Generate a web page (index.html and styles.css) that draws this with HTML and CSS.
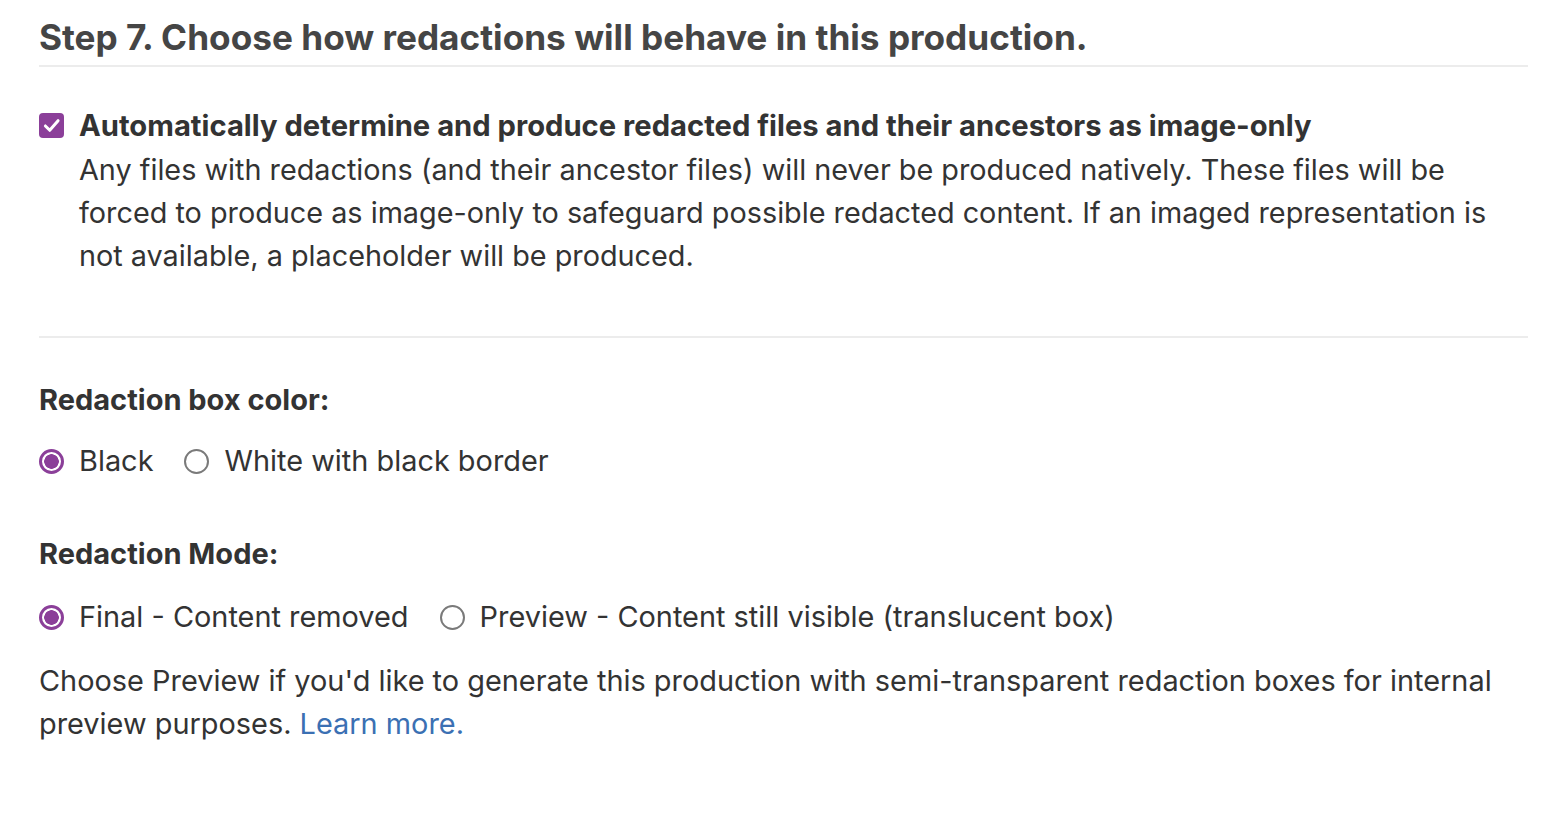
FILE: index.html
```html
<!DOCTYPE html>
<html>
<head>
<meta charset="utf-8">
<link rel="stylesheet" href="styles.css">
</head>
<body>
<div class="page">
  <h1 class="title">Step 7. Choose how redactions will behave in this production.</h1>

  <div class="check-row">
    <span class="checkbox">
      <svg viewBox="0 0 24 24" width="21" height="21"><path d="M5 12.5 L10 17.5 L19.5 6.5" fill="none" stroke="#fff" stroke-width="3.4" stroke-linecap="round" stroke-linejoin="round"/></svg>
    </span>
    <div class="check-text">
      <div class="check-label">Automatically determine and produce redacted files and their ancestors as image-only</div>
      <div class="check-desc">Any files with redactions (and their ancestor files) will never be produced natively. These files will be forced to produce as image-only to safeguard possible redacted content. If an imaged representation is not available, a placeholder will be produced.</div>
    </div>
  </div>

  <hr class="rule">

  <div class="field">
    <div class="field-label">Redaction box color:</div>
    <div class="radios">
      <label class="radio"><span class="dot on"></span>Black</label>
      <label class="radio"><span class="dot"></span>White with black border</label>
    </div>
  </div>

  <div class="field">
    <div class="field-label">Redaction Mode:</div>
    <div class="radios">
      <label class="radio"><span class="dot on"></span>Final - Content removed</label>
      <label class="radio"><span class="dot"></span>Preview - Content still visible (translucent box)</label>
    </div>
    <p class="note">Choose Preview if you'd like to generate this production with semi-transparent redaction boxes for internal preview purposes. <a class="link" href="#">Learn more.</a></p>
  </div>
</div>
</body>
</html>
```

FILE: styles.css
```css
html, body {
  margin: 0;
  padding: 0;
  background: #fff;
}
body {
  font-family: Inter, "Noto Sans", "Liberation Sans", sans-serif;
  color: #333;
}
.page {
  width: 1489px;
  padding: 14px 0 0 39px;
}
.title {
  margin: 0;
  font-size: 35.2px;
  font-weight: 700;
  color: #454545;
  line-height: 46px;
  padding-bottom: 5px;
  border-bottom: 2px solid #ececec;
}
.check-row {
  display: flex;
  gap: 15px;
  margin-top: 43px;
}
.checkbox {
  flex: none;
  width: 25px;
  height: 25px;
  margin-top: 3px;
  border-radius: 4px;
  background: #8b3f99;
  display: flex;
  align-items: center;
  justify-content: center;
}
.check-text {
  font-size: 28.8px;
  line-height: 43px;
}
.check-label {
  font-weight: 700;
  font-size: 29.2px;
  color: #333;
  line-height: 32px;
  margin-bottom: 6px;
}
.check-desc {
  color: #333;
}
.rule {
  border: 0;
  border-top: 2px solid #ececec;
  margin: 59px 0 0 0;
}
.field {
  margin-top: 45px;
}
.field + .field {
  margin-top: 58px;
}
.field-label {
  font-size: 29px;
  font-weight: 700;
  color: #333;
  line-height: 34px;
}
.radios {
  display: flex;
  gap: 31px;
  margin-top: 26px;
}
.field + .field .radios {
  margin-top: 28px;
}
.radio {
  display: flex;
  align-items: center;
  gap: 15px;
  font-size: 28.9px;
  line-height: 36px;
  color: #333;
}
.dot {
  box-sizing: border-box;
  width: 25px;
  height: 25px;
  border-radius: 50%;
  border: 2px solid #7a7a7a;
  flex: none;
}
.dot.on {
  border: 3px solid #8b3f99;
  background: radial-gradient(circle, #8b3f99 0 7px, #fff 7.5px);
}
.note {
  margin: 24px 0 0 0;
  font-size: 28.9px;
  line-height: 43px;
  color: #333;
}
.link {
  color: #3b70b3;
  text-decoration: none;
}
```
